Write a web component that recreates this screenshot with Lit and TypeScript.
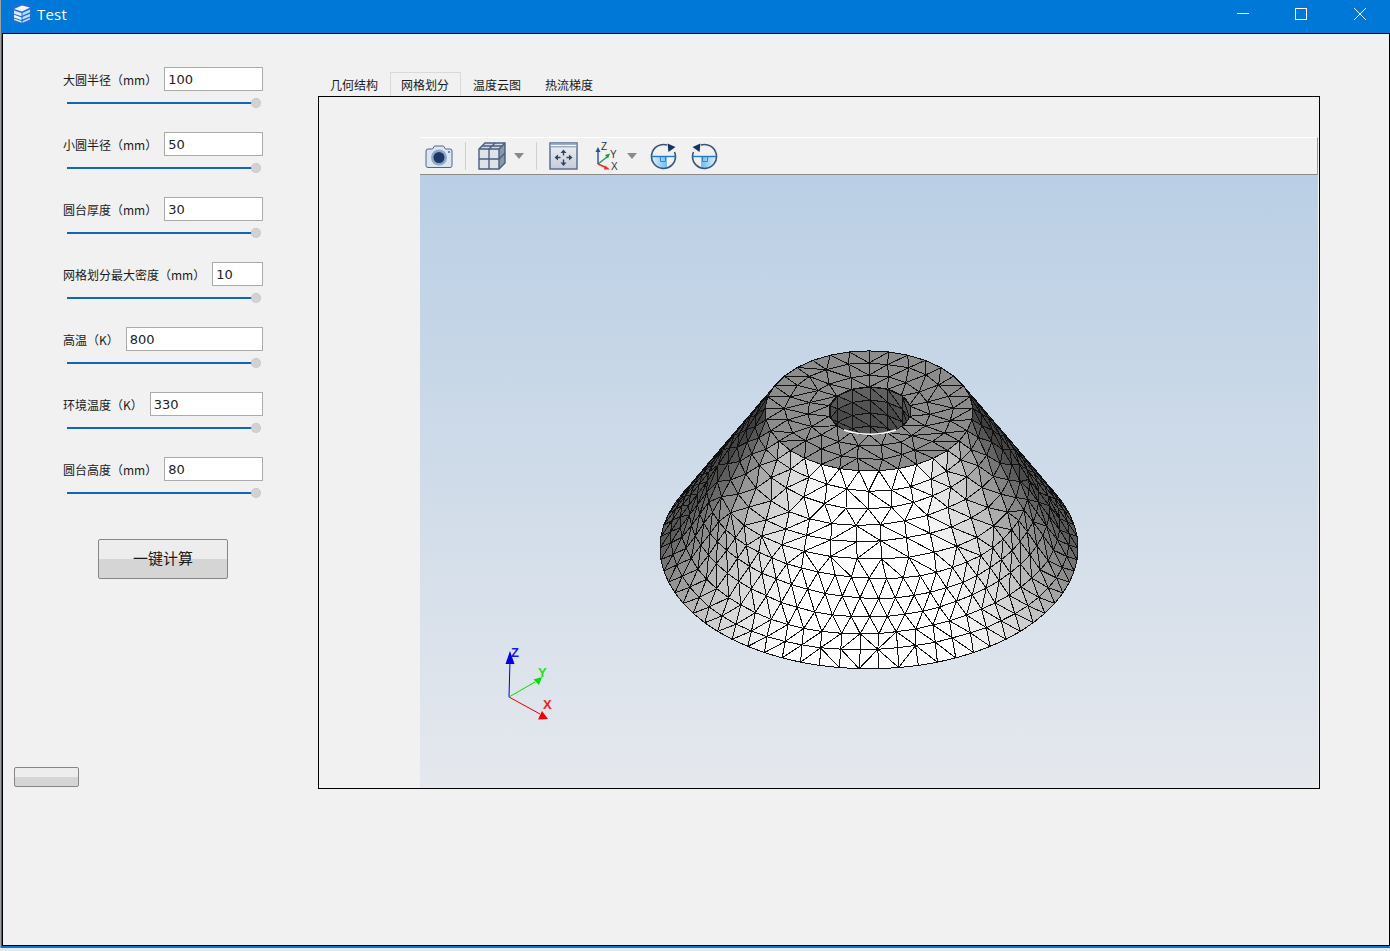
import { LitElement, html, svg, css } from "lit";
import { customElement } from "lit/decorators.js";

type Pt = [number, number];
type Tri = { d: string; fill: string };

// seeded so that the mesh stays the same between runs
let seed = 12345;
const rnd = () => {
	seed = (seed * 16807) % 2147483647;
	return seed / 2147483647 - 0.5;
};

const PX = -420;
const PY = -175;
const CX = 869 + PX;
const TILT = 0.578;
const fmt = (p: Pt) => `${p[0].toFixed(1)} ${p[1].toFixed(1)}`;
const tri = (a: Pt, b: Pt, c: Pt, fill: string): Tri => ({
	d: `M${fmt(a)}L${fmt(b)}L${fmt(c)}Z`,
	fill,
});
const grey = (v: number) => {
	const l = Math.round(Math.max(50, Math.min(255, v)));
	return `rgb(${l},${l},${l})`;
};
const cross = (a: Pt, b: Pt, c: Pt) =>
	(b[0] - a[0]) * (c[1] - a[1]) - (b[1] - a[1]) * (c[0] - a[0]);

type Node = { t: number; p: Pt };

// joins two rings of different vertex count, walking round both at once
function stitch(
	up: Node[],
	down: Node[],
	emit: (a: Node, b: Node, c: Node) => void,
) {
	let i = 0;
	let j = 0;
	while (i < up.length - 1 || j < down.length - 1) {
		const nextUp = i < up.length - 1 ? up[i + 1].t : Infinity;
		const nextDown = j < down.length - 1 ? down[j + 1].t : Infinity;
		if (nextUp <= nextDown) {
			emit(up[i], up[i + 1], down[j]);
			i++;
		} else {
			emit(up[i], down[j + 1], down[j]);
			j++;
		}
	}
}

function buildCone(): Tri[] {
	const out: { tri: Tri; depth: number }[] = [];
	const rows = 11;
	// the real mesh doubles its density about halfway down the slant
	const counts = [33, 33, 34, 34, 35, 36, 58, 60, 62, 64, 65, 66];
	const rings: Node[][] = [];
	for (let k = 0; k <= rows; k++) {
		const s = k / rows;
		const n = counts[k];
		const ring: Node[] = [];
		for (let q = 0; q <= n; q++) {
			const edge = k === 0 || k === rows;
			const end = q === 0 || q === n;
			const wob = end || edge ? 0 : rnd();
			const th = -Math.PI + ((q + (k % 2 && !end ? 0.5 : 0) + wob * 0.1) / n) * 2 * Math.PI;
			const wave = edge ? 0 : 0.011 * Math.sin(th * 3 + k) + rnd() * 0.004;
			const ss = s + wave;
			const r = 104 + 105 * ss;
			const cy = 411 + PY + 137 * ss;
			ring.push({
				t: th,
				p: [CX + r * Math.sin(th), cy + r * TILT * Math.cos(th)],
			});
		}
		rings.push(ring);
	}
	for (let k = 0; k < rows; k++) {
		const s = (k + 0.5) / rows;
		stitch(rings[k], rings[k + 1], (a, b, c) => {
			if (cross(a.p, b.p, c.p) <= 0) return;
			const th = (a.t + b.t + c.t) / 3;
			const cos = Math.cos(th);
			const lum =
				92 + 178 * Math.pow(Math.max(cos, 0), 1.05) - (1 - Math.max(cos, 0)) * (1 - s) * 34;
			out.push({ tri: tri(a.p, b.p, c.p, grey(lum)), depth: cos });
		});
	}
	return out.sort((x, y) => x.depth - y.depth).map((x) => x.tri);
}

function buildCap(): Tri[] {
	const out: Tri[] = [];
	const radii = [41, 62, 83, 104];
	const counts = [14, 19, 25, 33];
	const rings = radii.map((r, k) => {
		const n = counts[k];
		const ring: Node[] = [];
		for (let q = 0; q <= n; q++) {
			const edge = k === 0 || k === 3 || q === 0 || q === n;
			const th = -Math.PI + ((q + (edge ? 0 : rnd() * 0.3)) / n) * 2 * Math.PI;
			const rr = r + (edge ? 0 : rnd() * 4);
			ring.push({ t: th, p: [CX + rr * Math.sin(th), 411 + PY + rr * TILT * Math.cos(th)] });
		}
		return ring;
	});
	for (let k = 0; k < 3; k++) {
		stitch(rings[k], rings[k + 1], (a, b, c) => {
			out.push(tri(a.p, b.p, c.p, "#8c8c8c"));
		});
	}
	return out;
}

function buildHole(): Tri[] {
	const out: Tri[] = [];
	const n = 14;
	for (let k = 0; k < 4; k++) {
		for (let q = 0; q < n; q++) {
			const a0 = -Math.PI + (q / n) * 2 * Math.PI;
			const a1 = -Math.PI + ((q + 1) / n) * 2 * Math.PI;
			const at = (th: number, row: number): Pt => [
				CX + 1 + 41 * Math.sin(th),
				411 + PY + 24 * Math.cos(th) + row * 13,
			];
			const lum = 62 + 22 * Math.abs(Math.cos((a0 + a1) / 2)) + (k === 0 ? 14 : 0);
			out.push(tri(at(a0, k), at(a1, k), at(a0, k + 1), grey(lum)));
			out.push(tri(at(a1, k), at(a1, k + 1), at(a0, k + 1), grey(lum - 6)));
		}
	}
	return out;
}

const CONE = buildCone();
const CAP = buildCap();
const HOLE = buildHole();

type Field = { label: string; value: string };

const FIELDS: Field[] = [
	{ label: "大圆半径（mm）", value: "100" },
	{ label: "小圆半径（mm）", value: "50" },
	{ label: "圆台厚度（mm）", value: "30" },
	{ label: "网格划分最大密度（mm）", value: "10" },
	{ label: "高温（K）", value: "800" },
	{ label: "环境温度（K）", value: "330" },
	{ label: "圆台高度（mm）", value: "80" },
];

const TABS = ["几何结构", "网格划分", "温度云图", "热流梯度"];

@customElement("app-root")
export class AppRoot extends LitElement {
	static styles = css`
		:host {
			display: block;
			width: 1390px;
			height: 951px;
			overflow: hidden;
			font-family: "Noto Sans CJK SC", "Liberation Sans", sans-serif;
			color: #1a1a1a;
			background: linear-gradient(#c3c8cd, #e6e8ea);
		}

		.window {
			box-sizing: border-box;
			height: 948px;
			display: flex;
			flex-direction: column;
			background: #0078d7;
			padding: 0 0 2px 1px;
			border-left: 1px solid #9aa0a6;
		}

		.titlebar {
			height: 33px;
			flex: none;
			box-sizing: border-box;
			display: flex;
			align-items: center;
			color: #fff;
			padding: 0 0 5px 10px;
		}

		.title {
			margin-left: 5px;
			font: 15px/1 "Open Sans", sans-serif;
			letter-spacing: 0.2px;
		}

		.controls {
			margin-left: auto;
			display: flex;
		}

		.controls span {
			width: 58px;
			height: 28px;
			display: flex;
			align-items: center;
			justify-content: center;
		}

		.controls span:last-child {
			width: 60px;
		}

		.body {
			flex: 1;
			min-height: 0;
			display: flex;
			background: #f1f1f1;
			border: 1px solid #000;
		}

		.side {
			width: 315px;
			flex: none;
			box-sizing: border-box;
			padding: 33px 0 0 11px;
			display: flex;
			flex-direction: column;
		}

		.field {
			height: 65px;
			width: 200px;
			margin-left: 49px;
			flex: none;
		}

		.row {
			display: flex;
			align-items: center;
			gap: 7px;
			height: 24px;
		}

		.row label {
			font-size: 12px;
			white-space: nowrap;
			line-height: 24px;
			padding-top: 2px;
		}

		.input {
			flex: 1;
			box-sizing: border-box;
			height: 24px;
			background: #fff;
			border: 1px solid #ababab;
			padding-left: 3px;
			font: 13px/24px "DejaVu Sans", sans-serif;
			color: #222;
		}

		.slider {
			position: relative;
			height: 2px;
			width: 189px;
			margin: 11px 0 0 4px;
			background: #1565b5;
		}

		.thumb {
			position: absolute;
			right: -5px;
			top: -4px;
			width: 10px;
			height: 10px;
			border-radius: 50%;
			background: #d2d2d2;
			border: 1px dotted #bdbdbd;
			box-sizing: border-box;
		}

		.btn {
			box-sizing: border-box;
			border: 1px solid #868686;
			border-radius: 2px;
			background: linear-gradient(#ededed 50%, #d5d5d5 50%);
			display: flex;
			align-items: center;
			justify-content: center;
			font-size: 15px;
			padding-bottom: 3px;
		}

		.calc {
			width: 130px;
			height: 40px;
			margin: 17px 0 0 84px;
		}

		.small {
			width: 65px;
			height: 20px;
			margin-top: 188px;
		}

		.main {
			width: 1002px;
			flex: none;
			padding-top: 38px;
		}

		.tabs {
			display: flex;
			height: 24px;
		}

		.tab {
			box-sizing: border-box;
			width: 72px;
			padding-left: 10px;
			font-size: 12px;
			line-height: 24px;
			white-space: nowrap;
			border: 1px solid transparent;
			border-bottom: 0;
		}

		.tab:first-child {
			padding-left: 11px;
		}

		.tab.on {
			width: 71px;
			margin-right: 1px;
			border-color: #d9d9d9;
			line-height: 23px;
		}

		.panel {
			box-sizing: border-box;
			height: 693px;
			border: 1px solid #000;
			padding: 40px 1px 0 101px;
			display: flex;
			flex-direction: column;
		}

		.toolbar {
			box-sizing: border-box;
			flex: none;
			height: 38px;
			display: flex;
			align-items: center;
			border-top: 1px solid #fff;
			border-bottom: 1px solid #8c8c8c;
			border-right: 1px solid #9a9a9a;
		}

		.toolbar svg {
			display: block;
			flex: none;
		}

		.sep {
			width: 1px;
			height: 28px;
			background: #d0d0d0;
			flex: none;
		}

		.caret {
			width: 0;
			height: 0;
			flex: none;
			border-left: 5.5px solid transparent;
			border-right: 5.5px solid transparent;
			border-top: 6px solid #8a8a8a;
		}

		.m5 {
			margin-left: 5px;
		}
		.m8 {
			margin-left: 8px;
		}
		.m12 {
			margin-left: 12px;
		}
		.m13 {
			margin-left: 13px;
		}
		.m15 {
			margin-left: 14px;
		}
		.m17 {
			margin-left: 17px;
		}

		.plot {
			flex: 1;
			min-height: 0;
			background: linear-gradient(#bacfe5, #e5e8ed);
		}

		.plot svg {
			display: block;
		}
	`;

	private windowIcon() {
		return html`<svg width="20" height="20" viewBox="0 0 20 20">
			<rect width="20" height="20" fill="#1a6fd8" />
			<path d="M2 5l8-3.5 8 2-8 4z" fill="#f2f7fd" />
			<path d="M2 6.5l7.5 2.5v3.2L2 9.7z" fill="#dbe8f8" />
			<path d="M2 10.8l7.5 2.6v2.6L2 13.4z" fill="#f2f7fd" />
			<path d="M2 14.4l7.5 2.6v1.8L2 16z" fill="#dbe8f8" />
			<path d="M10.5 9l7.5-3.4v2.6l-7.5 3.2zM10.5 13l7.5-3.2v2.6l-7.5 3.2zM10.5 17l7.5-3.2v1.8l-7.5 3.2z" fill="#c4d9f4" />
		</svg>`;
	}

	private camera() {
		return html`<svg class="m5" width="28" height="25" viewBox="0 0 28 25">
			<path
				d="M1 7q0-2 2-2h4.5l2-3h9l2 3h4.5q2 0 2 2v14.5q0 2-2 2h-22q-2 0-2-2z"
				fill="#dbe6f2"
				stroke="#4a6590"
			/>
			<circle cx="14" cy="13.5" r="8" fill="#8fa6c6" />
			<circle cx="14" cy="13.5" r="5.5" fill="#1d3768" />
			<circle cx="24" cy="8" r="1" fill="#4a6590" />
		</svg>`;
	}

	private cube() {
		return html`<svg class="m12" width="28" height="28" viewBox="0 0 28 28">
			<path d="M1 7l6-6h20v20l-6 6H1z" fill="#d3d9e1" />
			<path d="M1 7h20v20H1z" fill="#dfe3e8" />
			<path d="M21 7l6-6v20l-6 6z" fill="#8a98ae" />
			<g fill="none" stroke="#4a5d80" stroke-width="1.4">
				<path d="M1 7l6-6h20v20l-6 6H1zM1 7h20v20M21 7l6-6" />
				<path d="M1 17h20l6-6M11 7v20M11 7l6-6M4 4h20" />
			</g>
		</svg>`;
	}

	private fit() {
		return html`<svg class="m12" width="29" height="28" viewBox="0 0 29 28">
			<defs>
				<linearGradient id="fitbg" x1="0" y1="0" x2="0" y2="1">
					<stop offset="0" stop-color="#f0f2f5" />
					<stop offset="1" stop-color="#c6ccd6" />
				</linearGradient>
			</defs>
			<rect x="1" y="1" width="27" height="26" fill="url(#fitbg)" stroke="#5a7095" stroke-width="1.5" />
			<rect x="1.5" y="1.5" width="26" height="4" fill="#9eafc6" />
			<rect x="2" y="3" width="25" height="1" fill="#f4f6f8" />
			<g stroke="#2e4468" stroke-width="1.4">
				<path d="M14.5 10v3.5M14.5 17.5V21M7.5 15.5h4M17.5 15.5h4" />
			</g>
			<g fill="#2e4468">
				<path d="M14.5 7.5l3 3.5h-6zM14.5 24l-3-3.5h6zM5.5 15.5l3.5-3v6zM23.5 15.5l-3.5 3v-6z" />
			</g>
		</svg>`;
	}

	private axes() {
		return html`<svg class="m17" width="24" height="28" viewBox="0 0 24 28">
			<path d="M3 22V9" stroke="#2a4fa8" stroke-width="1.4" />
			<path d="M0.5 10L3 5l2.5 5z" fill="#2a4fa8" />
			<path d="M3 22l9-7" stroke="#1f9a4a" stroke-width="1.4" />
			<path d="M10 13l5-1.5-2 5z" fill="#1f9a4a" />
			<path d="M3 22l9 4" stroke="#e0312e" stroke-width="1.4" />
			<path d="M10 23.5l5 4-6 0z" fill="#e0312e" />
			<g font-family="Liberation Sans, sans-serif" font-size="10" fill="#333">
				<text x="6" y="8">Z</text>
				<text x="15" y="16">Y</text>
				<text x="16" y="27.5">X</text>
			</g>
		</svg>`;
	}

	private rotate(flip: boolean) {
		const cls = flip ? "m15" : "m13";
		return html`<svg class="${cls}" width="27" height="27" viewBox="0 0 27 27">
			<defs>
				<linearGradient id="sector" x1="0" y1="0" x2="1" y2="0">
					<stop offset="0" stop-color="#e2f1fc" />
					<stop offset="1" stop-color="#6dbcf0" />
				</linearGradient>
			</defs>
			<g transform="${flip ? "translate(27 0) scale(-1 1)" : ""}">
				<path d="M17 13.5H1.5A12 12 0 0 0 13.5 25.5L17 25z" fill="url(#sector)" />
				<path d="M10.5 14v4.5h5V14" fill="none" stroke="#3f86c4" />
				<path
					d="M17 2A12 12 0 1 0 25.5 13.5A12 12 0 0 0 24.5 9"
					fill="none"
					stroke="#3a5378"
					stroke-width="1.6"
				/>
				<path d="M1.5 13.5H25.5" stroke="#1f78c8" stroke-width="1.4" />
				<path d="M17.5 0.5l8 3.5-7 5z" fill="#17345f" />
			</g>
		</svg>`;
	}

	private plot() {
		const o = (x: number, y: number) => `${x + PX} ${y + PY}`;
		const cy = 411 + PY;
		const holeX = CX + 1;
		return html`<svg width="897" height="612" viewBox="0 0 897 612">
			<defs>
				<clipPath id="hole">
					<ellipse cx="${holeX}" cy="${cy}" rx="41" ry="24" />
				</clipPath>
			</defs>
			<g stroke="#111" stroke-width="1" shape-rendering="crispEdges" stroke-linejoin="round">
				${CONE.map((t) => svg`<path d=${t.d} fill=${t.fill} />`)}
				${CAP.map((t) => svg`<path d=${t.d} fill=${t.fill} />`)}
				<g clip-path="url(#hole)">
					${HOLE.map((t) => svg`<path d=${t.d} fill=${t.fill} />`)}
				</g>
				<ellipse cx="${holeX}" cy="${cy}" rx="41" ry="24" fill="none" />
			</g>
			<path
				d="M${holeX - 26} ${cy + 19}Q${holeX} ${cy + 27.5} ${holeX + 26} ${cy + 19}"
				fill="none"
				stroke="#fff"
				stroke-width="1.6"
			/>
			<g stroke-width="1" fill="none">
				<path d="M${o(509, 697)}L${o(510, 660)}" stroke="#0000e0" />
				<path d="M${o(509, 697)}L${o(535, 682)}" stroke="#00e000" />
				<path d="M${o(509, 697)}L${o(540, 714)}" stroke="#e00000" />
			</g>
			<path d="M${o(510, 651)}l4.5 13h-9z" fill="#0000e0" />
			<path d="M${o(542, 677)}l-3 8-5.5-5.5z" fill="#00e000" />
			<path d="M${o(548, 719)}l-10 0.5 4-8.5z" fill="#f00000" />
			<g font-family="Liberation Sans, sans-serif" font-size="13" font-weight="700">
				<text x="${511 + PX}" y="${657 + PY}" fill="#1c1ce0">Z</text>
				<text x="${538 + PX}" y="${677 + PY}" fill="#22e022">Y</text>
				<text x="${543 + PX}" y="${709 + PY}" fill="#f02020">X</text>
			</g>
		</svg>`;
	}

	render() {
		return html`
			<div class="window">
				<div class="titlebar">
					${this.windowIcon()}
					<span class="title">Test</span>
					<div class="controls">
						<span>
							<svg width="12" height="12" viewBox="0 0 12 12"><path d="M0 5.5h12" stroke="#fff" /></svg>
						</span>
						<span>
							<svg width="12" height="12" viewBox="0 0 12 12">
								<rect x="0.5" y="0.5" width="11" height="11" fill="none" stroke="#fff" />
							</svg>
						</span>
						<span>
							<svg width="12" height="12" viewBox="0 0 12 12">
								<path d="M0 0l12 12M12 0L0 12" stroke="#fff" />
							</svg>
						</span>
					</div>
				</div>
				<div class="body">
					<div class="side">
						${FIELDS.map(
							(f) => html`
								<div class="field">
									<div class="row">
										<label>${f.label}</label>
										<div class="input">${f.value}</div>
									</div>
									<div class="slider"><div class="thumb"></div></div>
								</div>
							`,
						)}
						<div class="btn calc">一键计算</div>
						<div class="btn small"></div>
					</div>
					<div class="main">
						<div class="tabs">
							${TABS.map(
								(t, i) => html`<div class="tab ${i === 1 ? "on" : ""}">${t}</div>`,
							)}
						</div>
						<div class="panel">
							<div class="toolbar">
								${this.camera()}
								<div class="sep m12"></div>
								${this.cube()}
								<div class="caret m8"></div>
								<div class="sep m12"></div>
								${this.fit()}
								${this.axes()}
								<div class="caret m8"></div>
								${this.rotate(false)}
								${this.rotate(true)}
							</div>
							<div class="plot">${this.plot()}</div>
						</div>
					</div>
				</div>
			</div>
		`;
	}
}
